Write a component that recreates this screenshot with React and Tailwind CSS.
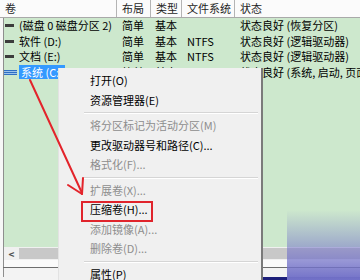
import React from 'react';

const COLS = [113, 34, 31, 53];

const rows = [
  { name: '(磁盘 0 磁盘分区 2)', layout: '简单', type: '基本', fs: '', status: '状态良好 (恢复分区)' },
  { name: '软件 (D:)', layout: '简单', type: '基本', fs: 'NTFS', status: '状态良好 (逻辑驱动器)' },
  { name: '文档 (E:)', layout: '简单', type: '基本', fs: 'NTFS', status: '状态良好 (逻辑驱动器)' },
  { name: '系统 (C:)', layout: '简单', type: '基本', fs: 'NTFS', status: '状态良好 (系统, 启动, 页面)', selected: true },
];

const menu = [
  { label: '打开(O)' },
  { label: '资源管理器(E)' },
  { sep: true },
  { label: '将分区标记为活动分区(M)', disabled: true },
  { label: '更改驱动器号和路径(C)...' },
  { label: '格式化(F)...', disabled: true },
  { sep: true },
  { label: '扩展卷(X)...', disabled: true },
  { label: '压缩卷(H)...', marked: true },
  { label: '添加镜像(A)...', disabled: true },
  { label: '删除卷(D)...', disabled: true },
  { sep: true },
  { label: '属性(P)' },
];

const HeaderCell = ({ width, children }) => (
  <div
    className="flex h-full shrink-0 items-center border-r border-[#b4b4b4] pl-[5px] text-[#1e1e1e]"
    style={width ? { width } : undefined}
  >
    {children}
  </div>
);

const App = () => {
  return (
    <div
      className="relative h-[280px] w-[360px] overflow-hidden bg-[#f7f7f7] text-[11px] leading-none text-black"
      style={{ fontFamily: '"Noto Sans CJK SC", "Noto Sans", sans-serif' }}
    >
      {/* column header */}
      <div className="flex h-[18px] border-b border-[#a9a9a9] bg-[#fbfbfb]">
        <HeaderCell width={117}>卷</HeaderCell>
        <HeaderCell width={34}>布局</HeaderCell>
        <HeaderCell width={31}>类型</HeaderCell>
        <HeaderCell width={53}>文件系统</HeaderCell>
        <div className="flex flex-1 items-center pl-[5px] text-[#1e1e1e]">状态</div>
      </div>

      {/* volume list */}
      <div className="ml-[3px] h-[229px] border-l border-[#8e8e8e] bg-[#cde8cd]">
        {rows.map((row) => (
          <div key={row.name} className="flex h-[15.5px] items-center overflow-hidden whitespace-nowrap">
            <div className="flex shrink-0 items-center" style={{ width: COLS[0] }}>
              {row.selected ? (
                <div className="flex h-[5px] w-[13px] flex-col justify-between bg-[#9cc2ea]">
                  <div className="h-px bg-[#2f6fc4]" />
                  <div className="h-px bg-[#2f6fc4]" />
                  <div className="h-px bg-[#2f6fc4]" />
                </div>
              ) : (
                <div className="ml-px h-[3px] w-[9px] bg-[#3c3c3c]" />
              )}
              {row.selected ? (
                <span className="ml-[2px] flex h-[14px] items-center bg-[#3399ff] px-[2px] text-white">
                  {row.name}
                </span>
              ) : (
                <span className="ml-[5px]">{row.name}</span>
              )}
            </div>
            <div className="shrink-0 pl-[5px]" style={{ width: COLS[1] }}>{row.layout}</div>
            <div className="shrink-0 pl-[4px]" style={{ width: COLS[2] }}>{row.type}</div>
            <div className="shrink-0 pl-[5px]" style={{ width: COLS[3] }}>{row.fs}</div>
            <div className="pl-[5px]">{row.status}</div>
          </div>
        ))}
      </div>

      {/* horizontal scrollbar */}
      <div className="ml-[3px] flex h-[13px] border-l border-[#8e8e8e] bg-[#f0f0f0]">
        <div className="flex w-[15px] items-center justify-center text-[10px] font-bold text-[#505050]">&lt;</div>
        <div className="my-[1px] flex-1 bg-[#c8c8c8]" />
      </div>

      {/* bottom pane edge */}
      <div className="ml-[3px] h-[7px] border-l border-[#8e8e8e] bg-[#fafafa]" />
      <div className="ml-[3px] h-px bg-[#6e6e6e]" />
      <div className="ml-[3px] h-[9px] border-l border-[#8e8e8e] bg-[#f3f3f3]" />
      <div className="flex h-[3px]">
        <div className="w-[240px] bg-[#f3f3f3]" />
        <div className="flex-1 bg-[#1d1f7a]" />
      </div>

      {/* watermark corner */}
      <div className="pointer-events-none absolute left-[287px] top-[210px] h-[70px] w-[73px] bg-linear-to-b from-[#cde8cd00] to-[#7271c8]" />

      {/* context menu */}
      <div className="absolute left-[58px] top-[68px] w-[203px] border-l border-[#e2e2e2] bg-[#f0f0f0] pt-[3px] shadow-[2px_0_0_#7a7a7a]">
        {menu.map((item, i) =>
          item.sep ? (
            <div key={i} className="flex h-[6px] flex-col justify-center pl-[25px] pr-[3px]">
              <div className="h-px bg-[#d5d5d5]" />
              <div className="h-px bg-white" />
            </div>
          ) : (
            <div
              key={i}
              className={`relative flex h-[19.5px] items-center whitespace-nowrap pl-[31px] ${
                item.disabled ? 'text-[#8d8d8d]' : 'text-black'
              }`}
            >
              {item.label}
              {item.marked && (
                <div className="absolute left-[22px] top-[1px] h-[21px] w-[72px] border-2 border-[#e0242c]" />
              )}
            </div>
          )
        )}
        <div className="h-[4px]" />
      </div>

      {/* annotation arrow */}
      <svg className="pointer-events-none absolute left-0 top-0" width="360" height="280" viewBox="0 0 360 280">
        <g stroke="#e3242b" strokeWidth="2" strokeLinecap="round" fill="none">
          <path d="M30 80 L82 193" />
          <path d="M68 185 L82 194" />
          <path d="M83 178 L82 194" />
        </g>
      </svg>
    </div>
  );
};

export default App;
